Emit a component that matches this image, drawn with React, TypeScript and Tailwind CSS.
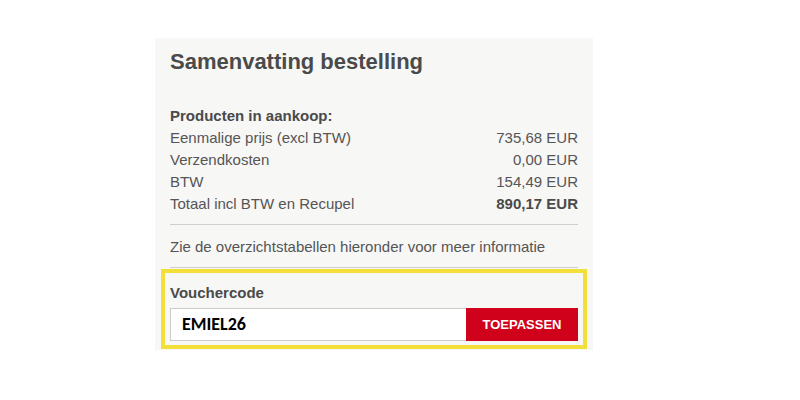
import React from 'react';

const rows = [
  { label: 'Eenmalige prijs (excl BTW)', value: '735,68 EUR' },
  { label: 'Verzendkosten', value: '0,00 EUR' },
  { label: 'BTW', value: '154,49 EUR' },
];

const App = () => {
  return (
    <div className="w-[800px] h-[400px] bg-white" style={{ fontFamily: '"Liberation Sans", Arial, sans-serif' }}>
      <div className="pt-[38px] pl-[155px]">
        <div className="w-[438px] h-[312px] bg-[#f7f7f5] px-[15px] text-[#555555]">
          {/* Title */}
          <h1 className="pt-[10px] text-[22px] leading-[28px] font-bold text-[#4a4a4a]">
            Samenvatting bestelling
          </h1>

          {/* Summary */}
          <div className="mt-[29px] text-[15px] leading-[22px]">
            <p className="font-bold text-[#4a4a4a]">Producten in aankoop:</p>
            {rows.map((row) => (
              <div key={row.label} className="flex justify-between">
                <span>{row.label}</span>
                <span>{row.value}</span>
              </div>
            ))}
            <div className="flex justify-between">
              <span>Totaal incl BTW en Recupel</span>
              <span className="font-bold text-[#4a4a4a]">890,17 EUR</span>
            </div>
          </div>

          <div className="mt-[9px] border-t border-[#cfcfcf]" />
          <p className="mt-[11px] text-[15px] leading-[22px]">
            Zie de overzichtstabellen hieronder voor meer informatie
          </p>
          <div className="mt-[9px] border-t border-[#cfcfcf]" />

          {/* Voucher */}
          <div className="-mx-[9px] mt-[1px] h-[80px] border-[4px] border-[#f3df3a] px-[5px]">
            <p className="pt-[10px] text-[15px] leading-[20px] font-bold text-[#4a4a4a]">Vouchercode</p>
            <div className="mt-[5px] flex h-[33px] border border-[#cccccc] bg-white">
              <div
                className="flex flex-1 items-center pl-[11px] text-[18px] font-bold text-black"
                style={{ fontFamily: 'Carlito, "Open Sans", "Liberation Sans", sans-serif' }}
              >
                EMIEL26
              </div>
              <button className="w-[112px] -my-px -mr-px bg-[#d0021b] text-[13px] font-bold text-white">
                TOEPASSEN
              </button>
            </div>
          </div>
        </div>
      </div>
    </div>
  );
};

export default App;
